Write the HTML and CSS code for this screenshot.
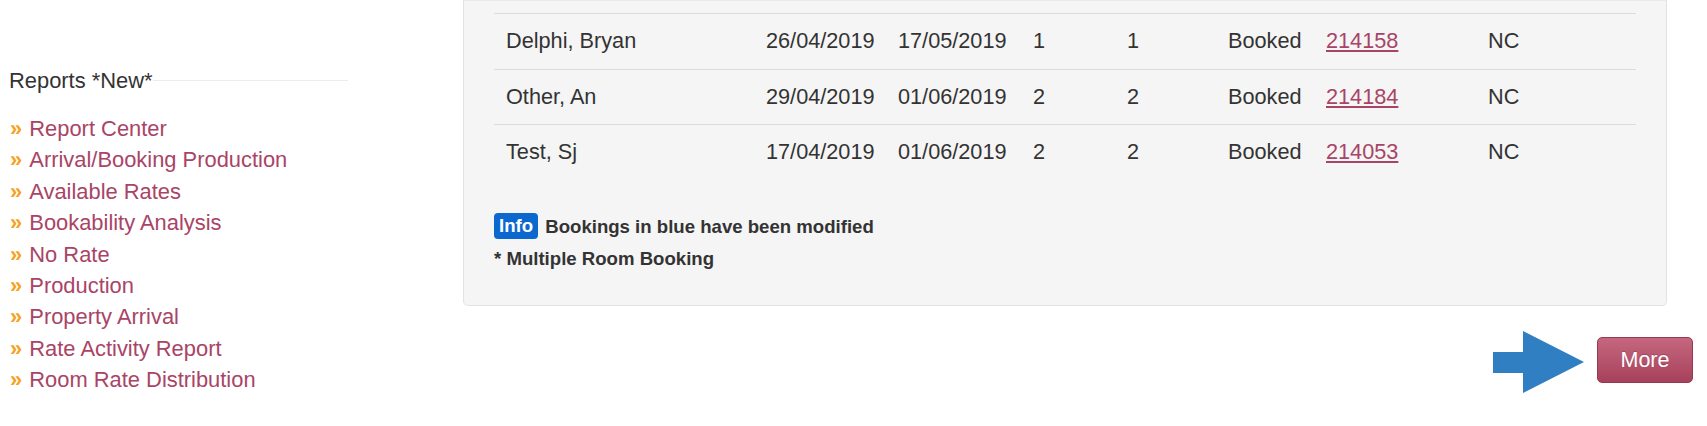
FILE: index.html
```html
<!DOCTYPE html>
<html lang="en">
<head>
  <meta charset="UTF-8" />
  <title>Bookings</title>
  <link rel="stylesheet" href="styles.css">
</head>
<body>
  <div class="page">
    <div class="sidebar">
      <div class="side-heading">Reports *New*</div>
      <ul class="side-links">
        <li><span class="raquo">&raquo;</span> <a href="#">Report Center</a></li>
        <li><span class="raquo">&raquo;</span> <a href="#">Arrival/Booking Production</a></li>
        <li><span class="raquo">&raquo;</span> <a href="#">Available Rates</a></li>
        <li><span class="raquo">&raquo;</span> <a href="#">Bookability Analysis</a></li>
        <li><span class="raquo">&raquo;</span> <a href="#">No Rate</a></li>
        <li><span class="raquo">&raquo;</span> <a href="#">Production</a></li>
        <li><span class="raquo">&raquo;</span> <a href="#">Property Arrival</a></li>
        <li><span class="raquo">&raquo;</span> <a href="#">Rate Activity Report</a></li>
        <li><span class="raquo">&raquo;</span> <a href="#">Room Rate Distribution</a></li>
      </ul>
    </div>

    <div class="main">
      <div class="well">
        <table class="bookings">
          <colgroup>
            <col class="c-name">
            <col class="c-arr">
            <col class="c-dep">
            <col class="c-rooms">
            <col class="c-guests">
            <col class="c-status">
            <col class="c-ref">
            <col class="c-rate">
          </colgroup>
          <tbody>
            <tr>
              <td>Delphi, Bryan</td>
              <td>26/04/2019</td>
              <td>17/05/2019</td>
              <td>1</td>
              <td>1</td>
              <td>Booked</td>
              <td><a href="#">214158</a></td>
              <td>NC</td>
            </tr>
            <tr>
              <td>Other, An</td>
              <td>29/04/2019</td>
              <td>01/06/2019</td>
              <td>2</td>
              <td>2</td>
              <td>Booked</td>
              <td><a href="#">214184</a></td>
              <td>NC</td>
            </tr>
            <tr>
              <td>Test, Sj</td>
              <td>17/04/2019</td>
              <td>01/06/2019</td>
              <td>2</td>
              <td>2</td>
              <td>Booked</td>
              <td><a href="#">214053</a></td>
              <td>NC</td>
            </tr>
          </tbody>
        </table>
        <div class="notes">
          <div><span class="label-info">Info</span> Bookings in blue have been modified</div>
          <div>* Multiple Room Booking</div>
        </div>
      </div>

      <div class="actions">
        <svg class="pointer" width="91" height="62" viewBox="0 0 91 62">
          <path d="M0 21 H30 V0 L91 31 L30 62 V42 H0 Z" fill="#2f7fc2" />
        </svg>
        <button type="button" class="btn-more">More</button>
      </div>
    </div>
  </div>
</body>
</html>
```

FILE: styles.css
```css
body {
  margin: 0;
  font-family: "Liberation Sans", Arial, sans-serif;
  color: #333;
  background: #fff;
}
.page {
  display: grid;
  grid-template-columns: 348px 1fr;
  column-gap: 115px;
}
.sidebar {
  padding: 66px 0 0 9px;
  font-size: 21.9px;
}
.side-heading {
  display: flex;
  align-items: center;
  line-height: 30px;
  color: #333;
}
.side-heading::after {
  content: "";
  flex: 1;
  height: 1px;
  background: #ececec;
  margin-top: -1px;
}
.side-links {
  list-style: none;
  margin: 17px 0 0;
  padding: 0;
}
.side-links li {
  line-height: 31.4px;
  white-space: nowrap;
}
.side-links a {
  color: #a94466;
  text-decoration: none;
  margin-left: 1px;
}
.raquo {
  color: #f6a21e;
  font-weight: bold;
  padding-left: 1px;
}
.well {
  margin-right: 40px;
  padding: 13px 30px 30px;
  background: #f5f5f5;
  border: 1px solid #e3e3e3;
  border-top: 0;
  border-radius: 0 0 5px 5px;
  box-shadow: inset 0 1px 1px rgba(0, 0, 0, 0.05);
}
.bookings {
  width: 100%;
  table-layout: fixed;
  border-collapse: separate;
  border-spacing: 0;
  font-size: 21.7px;
  margin-bottom: 31.5px;
}
.c-name { width: 260px; }
.c-arr { width: 132px; }
.c-dep { width: 135px; }
.c-rooms { width: 94px; }
.c-guests { width: 101px; }
.c-status { width: 98px; }
.c-ref { width: 162px; }
.bookings td {
  padding: 12px;
  line-height: 30.5px;
  border-top: 1px solid #dcdcdc;
  white-space: nowrap;
}
.bookings a {
  color: #a94466;
  text-decoration: underline;
}
.notes {
  font-size: 18.6px;
  font-weight: bold;
  line-height: 32px;
  color: #333;
}
.label-info {
  display: inline-block;
  height: 26px;
  line-height: 26px;
  padding: 0 5px;
  margin-right: 2px;
  border-radius: 4px;
  background: #0b68cf;
  color: #fff;
  vertical-align: 1px;
}
.actions {
  display: flex;
  justify-content: flex-end;
  align-items: flex-start;
  gap: 13px;
  padding: 25px 14px 0 0;
}
.pointer {
  display: block;
}
.btn-more {
  width: 96px;
  height: 46px;
  margin: 6px 0 0;
  padding: 0;
  font-family: "Liberation Sans", Arial, sans-serif;
  font-size: 21.5px;
  color: #fff;
  text-shadow: 0 -1px 0 rgba(0, 0, 0, 0.2);
  background: linear-gradient(#c5677f, #a7415b);
  border: 1px solid #983854;
  border-radius: 5px;
  cursor: pointer;
}
```
